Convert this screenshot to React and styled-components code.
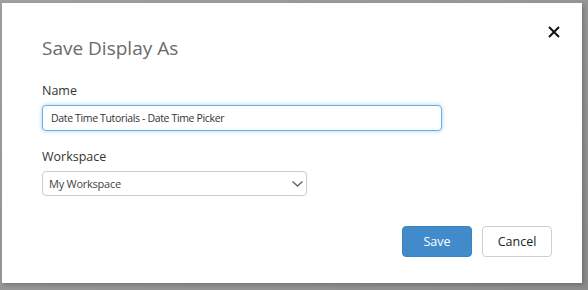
import React, { useEffect, useRef } from 'react';
import styled, { createGlobalStyle } from 'styled-components';

const GlobalStyle = createGlobalStyle`
  html, body {
    margin: 0;
    padding: 0;
    background: #8f8f8f;
  }
  body {
    font-family: "Open Sans", "Noto Sans", sans-serif;
    color: #333;
  }
`;

const Backdrop = styled.div`
  width: 588px;
  height: 290px;
  box-sizing: border-box;
  padding: 3px 6px 7px 2px;
  background: linear-gradient(to bottom right, #a0a0a0 0%, #8c8c8c 100%);
`;

const Dialog = styled.div`
  height: 100%;
  background: #fff;
  box-shadow: 2px 2px 4px rgba(0, 0, 0, 0.2);
  display: flex;
  flex-direction: column;
`;

const Header = styled.div`
  display: flex;
  justify-content: space-between;
  align-items: flex-start;
  padding: 23px 22px 0 40px;
`;

const Title = styled.h4`
  margin: 10px 0 0;
  font-size: 19px;
  line-height: 24px;
  font-weight: 400;
  color: #6b6b6b;
`;

const CloseButton = styled.button`
  border: 0;
  padding: 0;
  background: none;
  width: 12px;
  height: 12px;
  display: flex;
  cursor: pointer;
`;

const Body = styled.div`
  padding: 22px 0 0 40px;
  display: flex;
  flex-direction: column;
`;

const Field = styled.div`
  display: flex;
  flex-direction: column;
  gap: 5px;
  margin-bottom: ${(p) => p.$gap || 0}px;
`;

const Label = styled.label`
  font-size: 12.5px;
  line-height: 18px;
  color: #333;
`;

const TextInput = styled.input`
  box-sizing: border-box;
  width: 400px;
  height: 26px;
  padding: 0 8px;
  font-family: inherit;
  font-size: 10.5px;
  letter-spacing: -0.35px;
  color: #333;
  border: 1px solid #66afe9;
  border-radius: 4px;
  box-shadow: 0 0 4px rgba(102, 175, 233, 0.6);
  outline: none;
`;

const SelectWrap = styled.div`
  position: relative;
  width: 265px;
`;

const Select = styled.select`
  box-sizing: border-box;
  width: 100%;
  height: 25px;
  padding: 0 24px 0 6px;
  font-family: inherit;
  font-size: 11px;
  letter-spacing: -0.25px;
  color: #444;
  background: #fff;
  border: 1px solid #ccc;
  border-radius: 4px;
  appearance: none;
  outline: none;
`;

const Chevron = styled.svg`
  position: absolute;
  right: 4px;
  top: 10px;
  pointer-events: none;
`;

const Footer = styled.div`
  display: flex;
  justify-content: flex-end;
  gap: 10px;
  padding: 30px 30px 0 0;
`;

const Button = styled.button`
  box-sizing: border-box;
  width: 70px;
  height: 31px;
  font-family: inherit;
  font-size: 12.5px;
  border-radius: 4px;
  cursor: pointer;
  border: 1px solid ${(p) => (p.$primary ? '#3b84c4' : '#cfcfcf')};
  background: ${(p) => (p.$primary ? '#428bca' : '#fff')};
  color: ${(p) => (p.$primary ? '#fff' : '#222')};
`;

export default function App() {
  const inputRef = useRef(null);

  useEffect(() => {
    const el = inputRef.current;
    if (el) {
      el.focus();
      el.setSelectionRange(el.value.length, el.value.length);
    }
  }, []);

  return (
    <>
      <GlobalStyle />
      <Backdrop>
        <Dialog>
          <Header>
            <Title>Save Display As</Title>
            <CloseButton aria-label="Close">
              <svg width="12" height="12" viewBox="0 0 12 12">
                <path d="M1 1L11 11M11 1L1 11" stroke="#111" strokeWidth="2" />
              </svg>
            </CloseButton>
          </Header>
          <Body>
            <Field $gap={17}>
              <Label>Name</Label>
              <TextInput ref={inputRef} defaultValue="Date Time Tutorials - Date Time Picker" />
            </Field>
            <Field>
              <Label>Workspace</Label>
              <SelectWrap>
                <Select defaultValue="my">
                  <option value="my">My Workspace</option>
                </Select>
                <Chevron width="11" height="6" viewBox="0 0 11 6">
                  <path d="M0.5 0.5L5.5 5L10.5 0.5" stroke="#666" strokeWidth="1.4" fill="none" />
                </Chevron>
              </SelectWrap>
            </Field>
          </Body>
          <Footer>
            <Button $primary>Save</Button>
            <Button>Cancel</Button>
          </Footer>
        </Dialog>
      </Backdrop>
    </>
  );
}
